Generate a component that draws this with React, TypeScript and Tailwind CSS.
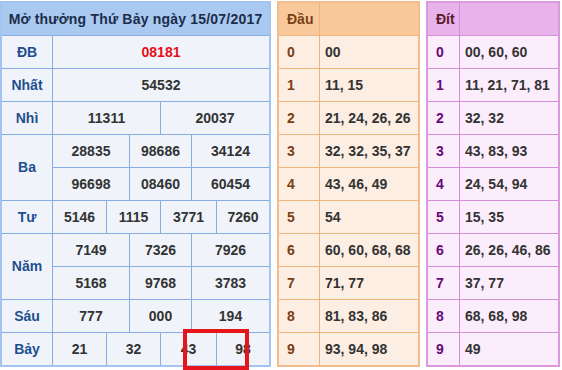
import React from 'react';

type Cell = { v: string; span: string; red?: boolean };
type Row = { label: string; rows: Cell[][] };

// column lines of the prize table: 6 segments after the label column
const THREE = ['col-span-2', 'col-span-2', 'col-span-2'];
const FOUR = ['col-span-1', 'col-span-2', 'col-span-2', 'col-span-1'];

const mk = (vals: string[], spans: string[]): Cell[] =>
  vals.map((v, i) => ({ v, span: spans[i] }));

const PRIZES: Row[] = [
  { label: 'ĐB', rows: [[{ v: '08181', span: 'col-span-6', red: true }]] },
  { label: 'Nhất', rows: [[{ v: '54532', span: 'col-span-6' }]] },
  { label: 'Nhì', rows: [mk(['11311', '20037'], ['col-span-3', 'col-span-3'])] },
  {
    label: 'Ba',
    rows: [mk(['28835', '98686', '34124'], THREE), mk(['96698', '08460', '60454'], THREE)],
  },
  { label: 'Tư', rows: [mk(['5146', '1115', '3771', '7260'], FOUR)] },
  {
    label: 'Năm',
    rows: [mk(['7149', '7326', '7926'], THREE), mk(['5168', '9768', '3783'], THREE)],
  },
  { label: 'Sáu', rows: [mk(['777', '000', '194'], THREE)] },
  { label: 'Bảy', rows: [mk(['21', '32', '43', '98'], FOUR)] },
];

const DAU = ['00', '11, 15', '21, 24, 26, 26', '32, 32, 35, 37', '43, 46, 49', '54', '60, 60, 68, 68', '71, 77', '81, 83, 86', '93, 94, 98'];
const DIT = ['00, 60, 60', '11, 21, 71, 81', '32, 32', '43, 83, 93', '24, 54, 94', '15, 35', '26, 26, 46, 86', '37, 77', '68, 68, 98', '49'];

const PrizeTable = () => (
  <div className="border-2 border-[#a3c4ee] bg-[#86aee2]">
    <div className="grid grid-cols-[50px_53px_22px_30px_30px_24px_52px] auto-rows-[32px] gap-px">
      <div className="col-span-7 bg-[#a9c9f1] flex items-center justify-center text-[#1c2d4a] tracking-[0.2px]">
        Mở thưởng Thứ Bảy ngày 15/07/2017
      </div>
      {PRIZES.map((p) => (
        <React.Fragment key={p.label}>
          <div
            className={`bg-[#f0f4fa] flex items-center justify-center text-[#1f4f8f] ${
              p.rows.length === 2 ? 'row-span-2' : ''
            }`}
          >
            {p.label}
          </div>
          {p.rows.map((r, ri) =>
            r.map((c, ci) => (
              <div
                key={`${ri}-${ci}`}
                className={`${c.span} ${ri === 1 && ci === 0 ? 'col-start-2' : ''} bg-[#f0f4fa] flex items-center justify-center ${
                  c.red ? 'text-[#e3101c]' : 'text-[#333333]'
                }`}
              >
                {c.v}
              </div>
            ))
          )}
        </React.Fragment>
      ))}
    </div>
  </div>
);

type LotoProps = {
  title: string;
  values: string[];
  cols: string;
  outer: string;
  line: string;
  head: string;
  body: string;
  titleColor: string;
  digitColor: string;
  pad: string;
};

const LotoTable: React.FC<LotoProps> = ({ title, values, cols, outer, line, head, body, titleColor, digitColor, pad }) => (
  <div className={`border-2 ${outer} ${line}`}>
    <div className={`grid ${cols} auto-rows-[32px] gap-px`}>
      <div className={`${head} ${titleColor} ${pad} flex items-center`}>{title}</div>
      <div className={head}></div>
      {values.map((v, i) => (
        <React.Fragment key={i}>
          <div className={`${body} ${digitColor} ${pad} flex items-center`}>{i}</div>
          <div className={`${body} text-[#333333] pl-[5px] flex items-center`}>{v}</div>
        </React.Fragment>
      ))}
    </div>
  </div>
);

export default function App() {
  return (
    <div className="relative w-[562px] h-[370px] bg-white overflow-hidden font-['Liberation_Sans',Arial,sans-serif] text-[14px] font-bold">
      <div className="flex items-start pt-px">
        <PrizeTable />
        <div className="ml-[6px]">
          <LotoTable
            title="Đầu"
            values={DAU}
            cols="grid-cols-[40px_98px]"
            outer="border-[#f2bd8c]"
            line="bg-[#efb47e]"
            head="bg-[#f9c99c]"
            body="bg-[#fdeee3]"
            titleColor="text-[#7a3f12]"
            digitColor="text-[#7a3f12]"
            pad="pl-[8px]"
          />
        </div>
        <div className="ml-[6px]">
          <LotoTable
            title="Đít"
            values={DIT}
            cols="grid-cols-[31px_98px]"
            outer="border-[#dc9ade]"
            line="bg-[#d58ed8]"
            head="bg-[#e8b2ea]"
            body="bg-[#fcedfc]"
            titleColor="text-[#5a1c2c]"
            digitColor="text-[#660a78]"
            pad="pl-[8px]"
          />
        </div>
      </div>
      {/* red highlight box drawn over the last row */}
      <div className="absolute left-[183px] top-[329px] w-[66px] h-[41px] border-[4px] border-[#e8141c]"></div>
    </div>
  );
}
